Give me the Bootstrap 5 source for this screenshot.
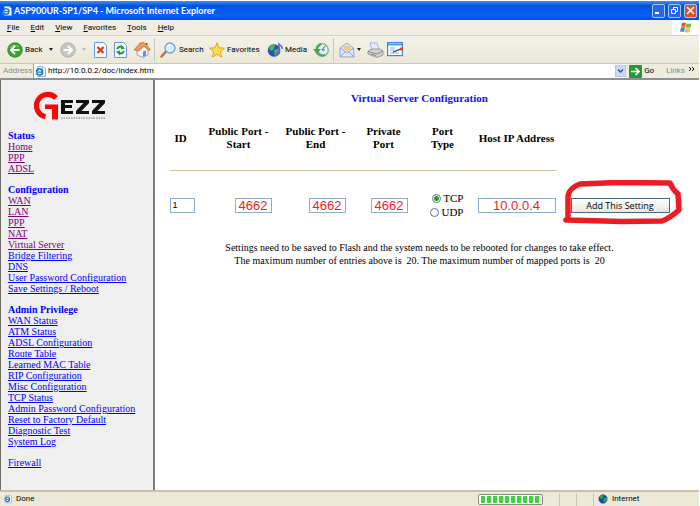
<!DOCTYPE html>
<html lang="en">
<head>
<meta charset="utf-8">
<meta name="viewport" content="width=device-width, initial-scale=1">
<title>ASP900UR-SP1/SP4 - Microsoft Internet Explorer</title>
<link href="https://cdn.jsdelivr.net/npm/bootstrap@5.3.0/dist/css/bootstrap.min.css" rel="stylesheet">
<style>
body{font:8px/10px Roboto,"Liberation Sans",sans-serif;color:#000;background:#fff;padding:1px 1px 0 0}
svg{display:block;flex:none}
button{font:inherit;color:inherit}
.titlebar{height:19px;background:linear-gradient(#3a92fa,#0453dd 25%,#0560f8 75%,#0450d8);color:#fff;padding:0 2px}
.titlebar h1{font:bold 9px/14px Lato,"Noto Sans",sans-serif;margin:0 auto 0 2px}
.winbtns{gap:3px}
.winbtn{width:13px;height:14px;padding:0;border:1px solid #a9c4f5;border-radius:2px;background:#2a63e4;display:grid;place-items:center}
.winbtn.shut{background:#dd5030}
.menubar{height:16px;background:#efede4;border-bottom:1px solid #d8d4c4}
.menubar button,.tool{border:0;background:none;padding:0;text-align:left}
.menubar button::first-letter{text-decoration:underline}
.menus{padding-left:7px;gap:11px}
.flagbox{width:27px;background:#fff}
.toolbar{height:28px;background:linear-gradient(#f3f1e8,#ebe8d8);border-bottom:1px solid #b9cbdc;padding-left:7px}
.tool{display:flex;align-items:center;gap:2px;height:18px}
.w20{width:20px}.w28{width:28px}.w34{width:34px}.w53{width:53px}.w49{width:49px}.w58{width:58px}.w46{width:46px}
.rule{width:1px;height:24px;background:#cbc8b8;margin-right:5px}
.caret{width:0;height:0;border:2px solid transparent;border-top:3px solid #222;border-bottom:0}
.addressbar{height:16px;background:#efecdd;border-bottom:2px solid #8d928e;gap:3px}
.addressbar label,.dim{color:#8b8a82}
.addressbar label{width:30px;padding-left:3px}
.urlbox{height:14px;background:#fff;border-left:1px solid #8ba5c4;padding-left:1px}
.urlbox input{border:0;padding:0 0 0 2px;outline:0;background:none;font:inherit;min-width:0}
.dropbtn{width:11px;height:12px;border:1px solid #b5c8f0;background:#c9d8fa;padding:0;display:grid;place-items:center}
.sidebar{width:155px;background:#efefef;border-left:1px solid #716f64;border-right:2px solid #827f72;padding:10px 6px 10px 7px;font:10px/11px "Liberation Serif",serif}
.sidebar h2{font:bold 10px/11px "Liberation Serif",serif;color:#00f;margin:0}
.sidebar ul{margin-bottom:10px}
.sidebar a{color:#00f;text-decoration:underline}
.sidebar a.seen{color:#800080}
.brand-logo{margin:0 0 10px 23px}
.page{font:10px/13px "Liberation Serif",serif;padding:11px 15px 0 0}
.page h2{font:bold 11px/14px "Liberation Serif",serif;color:#11f;margin-bottom:13px}
.page table{width:500px;table-layout:fixed}
.page th{font-size:11px;line-height:13px;height:40px;text-align:center;vertical-align:middle;padding:0}
.page td{padding:0}
.page th.idh{text-align:left;padding-left:5px}
.page hr{margin:12px 0 19px;border:0;height:1px;background:#cdc3a0;opacity:1}
.page tr.entry td{height:30px;vertical-align:middle}
.p6{padding-right:6px!important}.p8{padding-right:8px!important}
.page input[type=text]{height:15px;border:1px solid #8fadcb;background:#fff;padding:0;border-radius:0;display:block;font:13px/13px "Liberation Sans",sans-serif;color:#ed1c24;text-align:center}
.page input[type=text].idbox{width:25px;font-size:9px;color:#000;text-align:left;padding-left:2px}
.page input.port{width:37px;margin-left:auto}
.page input.host{width:78px;margin:auto}
.radio-row{display:flex;align-items:center;justify-content:flex-end;gap:2px;line-height:14px;font-size:11px}
.radio-row input{appearance:none;width:9px;height:9px;margin:0;border:1px solid #53779c;border-radius:50%;background:#fff}
.radio-row input:checked{background:radial-gradient(#21a121 0 2px,#fff 3px)}
.addbtn{width:99px;height:15px;border:1px solid #47688e;background:linear-gradient(#fff,#e9e7dc);font:9px/11px "Open Sans","Noto Sans",sans-serif;padding:0}
.scrawl{position:absolute;left:-9px;top:-18px;pointer-events:none}
.note{margin-top:21px}
.statusbar{height:16px;border-top:2px solid #c5c1ae;background:#ece9d8}
.meter{width:65px;height:11px;border:1px solid #8a8a84;border-radius:2px;background:#fff;padding:1px 2px}
.meter div{height:7px;background:repeating-linear-gradient(90deg,#3fd33f 0 4px,#fff 4px 6px)}
.cell{height:13px;border-left:1px solid #c9c5b2}
.zone{width:91px}
</style>
</head>
<body class="min-vh-100 d-flex flex-column">
<svg width="0" height="0" class="position-absolute" aria-hidden="true">
  <symbol id="ie" viewBox="0 0 12 12"><path d="M3 .5h6l2.500 2.500v8.500H3z" fill="#fff" stroke="#7fa8dc"/><circle cx="5" cy="6.500" r="3.300" fill="#e8f5ff" stroke="#1976c8" stroke-width="1.800"/><path d="M2 6.700h6" stroke="#1976c8" stroke-width="1.300"/><path d="M.5 10Q3 3 9 2" fill="none" stroke="#65b3ee"/></symbol>
  <symbol id="globe" viewBox="0 0 12 12"><circle cx="6" cy="6" r="5" fill="#1c42c9" stroke="#12277c" stroke-width=".6"/><path d="M3 2l4-1-1 3-2 2-2-1zM7 5l3-1 1 3-3 3-2-2z" fill="#2cae38"/></symbol>
</svg>

<header>
  <div class="titlebar d-flex align-items-center">
    <svg width="10" height="10"><use href="#ie"/></svg>
    <h1>ASP900UR-SP1/SP4 - Microsoft Internet Explorer</h1>
    <div class="winbtns d-flex">
      <button class="winbtn" aria-label="Minimize"><svg width="9" height="9"><path d="M1 7h4" stroke="#fff" stroke-width="2"/></svg></button>
      <button class="winbtn" aria-label="Restore"><svg width="9" height="9"><path d="M3.500 3V1.500h4v4H6M1.500 3.500h4v4h-4z" fill="none" stroke="#fff"/></svg></button>
      <button class="winbtn shut" aria-label="Close"><svg width="9" height="9"><path d="M1 1l7 7M8 1L1 8" stroke="#fff" stroke-width="1.500"/></svg></button>
    </div>
  </div>
  <nav class="menubar d-flex" aria-label="Menu">
    <div class="menus d-flex align-items-center flex-grow-1">
      <button>File</button><button>Edit</button><button>View</button><button>Favorites</button><button>Tools</button><button>Help</button>
    </div>
    <div class="flagbox d-flex align-items-center justify-content-center">
      <svg width="12" height="11" viewBox="0 0 12 11"><path d="M2 1q2-1 4 0L5 5q-2-1-4 0z" fill="#e9562b"/><path d="M6.500 1.300q2 1 5 0l-1 4q-2.500 1-5 0z" fill="#75b83a"/><path d="M1 5.500q2-1 4 0L4 10q-2-1-4 0z" fill="#4b83e0"/><path d="M5.500 6q2 1 5 0l-1 4q-2.500 1-5 0z" fill="#f5bd2e"/></svg>
    </div>
  </nav>
  <div class="toolbar d-flex align-items-center" role="toolbar" aria-label="Standard buttons">
    <button class="tool w53"><svg width="16" height="16"><circle cx="8" cy="8" r="7.300" fill="#37a62f" stroke="#247a22" stroke-width=".7"/><path d="M3 6q4-5 9-1" stroke="#8ed982" fill="none"/><path d="M8 4L4 8l4 4M4.500 8H12.500" fill="none" stroke="#fff" stroke-width="2"/></svg>Back<span class="caret ms-1"></span></button>
    <button class="tool w34" aria-label="Forward"><svg width="16" height="16"><circle cx="8" cy="8" r="7.300" fill="#c5c5c3" stroke="#a3a3a0" stroke-width=".7"/><path d="M8 4l4 4-4 4M11.500 8H3.500" fill="none" stroke="#fff" stroke-width="2"/></svg><span class="caret ms-1 opacity-25"></span></button>
    <button class="tool w20" aria-label="Stop"><svg width="13" height="16"><path d="M.5.500h9l3 3v12H.5z" fill="#f4f8ff" stroke="#6f96d8"/><path d="M3.500 5l6 6M9.500 5l-6 6" stroke="#e23a1e" stroke-width="2.200"/></svg></button>
    <button class="tool w20" aria-label="Refresh"><svg width="13" height="16"><path d="M.5.500h9l3 3v12H.5z" fill="#f4f8ff" stroke="#6f96d8"/><path d="M3 7q2-3.500 5-2M10 9q-2 3.500-5 2" fill="none" stroke="#1f9a35" stroke-width="2"/><path d="M7 2.500l4 4-4 1zM6 13.500l-4-4 4-1z" fill="#1f9a35"/></svg></button>
    <button class="tool w20" aria-label="Home"><svg width="17" height="16"><path d="M3 7v6l6 2.500 5-3V7L9 3z" fill="#eef3fc" stroke="#7d95c5" stroke-width=".8"/><path d="M0 8l6-7 4-.5 6.500 7-2 1L10 4 5 9z" fill="#f09a55" stroke="#b05b30" stroke-width=".6"/><path d="M11 1h2.500v3z" fill="#b9502c"/><path d="M9 9.500l3-1v5l-3 1.500z" fill="#6d8fd2"/></svg></button>
    <span class="rule"></span>
    <button class="tool w49"><svg width="17" height="16"><path d="M1.500 14.500L6 9.500" stroke="#bd6a42" stroke-width="2.500" stroke-linecap="round"/><circle cx="10" cy="6" r="5" fill="#d8f0ff" stroke="#6aa2df" stroke-width="1.300"/><path d="M7 5q1.500-2.500 4-2" stroke="#fff" stroke-width="1.500" fill="none"/></svg>Search</button>
    <button class="tool w58"><svg width="16" height="16"><path d="M8 .8l2 5 5.500.4-4.200 3.600 1.500 5.400L8 12.300 3.200 15.200l1.500-5.400L.5 6.200 6 5.800z" fill="#ffdc55" stroke="#dd9a18" stroke-width=".9"/></svg>Favorites</button>
    <button class="tool w46"><svg width="16" height="16"><circle cx="7" cy="8.500" r="6" fill="#2450d2" stroke="#28409b" stroke-width=".5"/><path d="M2 6q2-4 6-3.500L7 7l-3 2zM7 8l4-1 1 4-4 3z" fill="#49bb47"/><path d="M12 10V2l3 3v2" fill="none" stroke="#6a64c2" stroke-width="1.500"/><ellipse cx="11" cy="11" rx="2" ry="1.600" fill="#6a64c2"/></svg>Media</button>
    <button class="tool w20" aria-label="History"><svg width="16" height="16"><circle cx="9" cy="8" r="6.300" fill="#e1f1f5" stroke="#8ba8a5" stroke-width="1.300"/><path d="M9 8l3-4M9 8h3" stroke="#42607a"/><path d="M12 13A6 6 0 0 1 4 8q0-4 4-6" fill="none" stroke="#48a83e" stroke-width="2"/><path d="M0 7h8l-4 5z" fill="#48a83e"/></svg></button>
    <span class="rule"></span>
    <button class="tool w28" aria-label="Mail"><svg width="16" height="16"><path d="M1 6l7-5 6.500 5L15 15H1z" fill="#dceaff" stroke="#879ccc" stroke-width=".9"/><path d="M3.500 6q4-5 9 0L8 9z" fill="#f7c477"/><path d="M1 6l7 5 6.500-5M1 15l5-5M15 15l-5-5" fill="none" stroke="#879ccc" stroke-width=".9"/></svg><span class="caret"></span></button>
    <button class="tool w20" aria-label="Print"><svg width="17" height="16"><path d="M3 1h7l2 7H5z" fill="#e3efff" stroke="#8fa9d6" stroke-width=".8"/><path d="M1 9l4-2h8l3 2v4l-6 2.500L1 12z" fill="#d2d2d0" stroke="#8b8b8b" stroke-width=".8"/><path d="M1 9.500l9 2.500 6-3M4 12l5 1.500" stroke="#74747b" fill="none" stroke-width=".8"/></svg></button>
    <button class="tool" aria-label="Edit"><svg width="17" height="15"><rect x=".6" y=".6" width="14.800" height="13" fill="#fff" stroke="#3b86d6" stroke-width="1.200"/><path d="M1 2.500h14" stroke="#4e9be8" stroke-width="2"/><path d="M3 6h5M3 8h4M3 11h9" stroke="#8aabd0"/><path d="M6 10l8-3" stroke="#41638c" stroke-width="1.500"/><circle cx="14.500" cy="7" r="1.700" fill="#dc4526"/></svg></button>
  </div>
  <div class="addressbar d-flex align-items-center">
    <label for="url">Address</label>
    <div class="urlbox d-flex align-items-center flex-grow-1">
      <svg width="11" height="11"><use href="#ie"/></svg>
      <input id="url" type="text" class="flex-grow-1" value="http://10.0.0.2/doc/index.htm">
      <button class="dropbtn" aria-label="Show addresses"><svg width="7" height="6"><path d="M1 1.500l2.500 2.500L6 1.500" fill="none" stroke="#3d5687" stroke-width="1.500"/></svg></button>
    </div>
    <button class="tool w34"><svg width="13" height="13"><rect width="13" height="13" rx="1" fill="#239a3a"/><path d="M2 6.500h8M6.500 3l3.500 3.500L6.500 10" fill="none" stroke="#fff" stroke-width="1.700"/></svg><span>Go</span></button>
    <span class="dim">Links</span>
    <svg class="me-1 mb-1" width="7" height="6"><path d="M1 1l2 2-2 2M4 1l2 2-2 2" fill="none" stroke="#111"/></svg>
  </div>
</header>

<div class="d-flex flex-grow-1">
  <nav class="sidebar flex-shrink-0" aria-label="Router pages">
    <svg class="brand-logo" width="76" height="30" viewBox="0 0 76 30" role="img" aria-label="Gezz">
      <path d="M25 8A11.300 11.300 0 1 0 14.500 26.800" fill="none" stroke="#f60808" stroke-width="5.200"/>
      <path d="M14 14.500h13V29.500h-6V19H14z" fill="#f60808"/>
      <path d="M30 10h12v3h-8v2h7v3h-7v3h8v3H30zM45 10h13v3l-7.500 8H58v3H45v-3l7.500-8H45zM61 10h13v3l-7.500 8H74v3H61v-3l7.500-8H61z" fill="#111"/>
      <path d="M30 28h44" stroke="#777" stroke-dasharray="1.500 1"/>
    </svg>
    <h2>Status</h2>
    <ul class="list-unstyled">
      <li><a class="seen" href="#">Home</a></li><li><a class="seen" href="#">PPP</a></li><li><a class="seen" href="#">ADSL</a></li>
    </ul>
    <h2>Configuration</h2>
    <ul class="list-unstyled">
      <li><a class="seen" href="#">WAN</a></li><li><a class="seen" href="#">LAN</a></li><li><a class="seen" href="#">PPP</a></li><li><a class="seen" href="#">NAT</a></li><li><a class="seen" href="#">Virtual Server</a></li><li><a href="#">Bridge Filtering</a></li><li><a href="#">DNS</a></li><li><a href="#">User Password Configuration</a></li><li><a href="#">Save Settings / Reboot</a></li>
    </ul>
    <h2>Admin Privilege</h2>
    <ul class="list-unstyled">
      <li><a href="#">WAN Status</a></li><li><a href="#">ATM Status</a></li><li><a href="#">ADSL Configuration</a></li><li><a href="#">Route Table</a></li><li><a href="#">Learned MAC Table</a></li><li><a href="#">RIP Configuration</a></li><li><a href="#">Misc Configuration</a></li><li><a href="#">TCP Status</a></li><li><a href="#">Admin Password Configuration</a></li><li><a href="#">Reset to Factory Default</a></li><li><a href="#">Diagnostic Test</a></li><li><a href="#">System Log</a></li>
    </ul>
    <a href="#">Firewall</a>
  </nav>

  <main class="page flex-grow-1 text-center">
    <h2>Virtual Server Configuration</h2>
    <form>
      <table class="mx-auto">
        <colgroup><col style="width:6%"><col style="width:15.600%"><col style="width:15.200%"><col style="width:12%"><col style="width:11.600%"><col style="width:18%"><col style="width:21.600%"></colgroup>
        <thead>
          <tr><th class="idh">ID</th><th>Public Port -<br>Start</th><th>Public Port -<br>End</th><th>Private<br>Port</th><th>Port<br>Type</th><th>Host IP Address</th><td></td></tr>
        </thead>
        <tbody>
          <tr><td colspan="6" class="p6"><hr></td><td></td></tr>
          <tr class="entry">
            <td><input class="idbox" type="text" value="1" aria-label="ID"></td>
            <td class="p6"><input class="port" type="text" value="4662" aria-label="Public port start"></td>
            <td class="p8"><input class="port" type="text" value="4662" aria-label="Public port end"></td>
            <td class="p6"><input class="port" type="text" value="4662" aria-label="Private port"></td>
            <td class="p8">
              <label class="radio-row"><input type="radio" name="proto" checked>TCP</label>
              <label class="radio-row"><input type="radio" name="proto">UDP</label>
            </td>
            <td><input class="host" type="text" value="10.0.0.4" aria-label="Host IP address"></td>
            <td class="text-end">
              <div class="position-relative d-inline-block align-middle">
                <button type="button" class="addbtn d-block">Add This Setting</button>
                <svg class="scrawl" width="124" height="46" viewBox="0 0 124 46" aria-hidden="true"><path d="M6 38L6 16Q7 8 18 4L55 2.500L108 3Q111 10 116 14L117 30Q108 38 100 41L60 41.500L4 40" fill="none" stroke="#ed1c24" stroke-width="5.500" stroke-linecap="round" stroke-linejoin="round"/></svg>
              </div>
            </td>
          </tr>
        </tbody>
      </table>
    </form>
    <p class="note">Settings need to be saved to Flash and the system needs to be rebooted for changes to take effect.<br>The maximum number of entries above is&nbsp; 20. The maximum number of mapped ports is&nbsp; 20</p>
  </main>
</div>

<footer class="statusbar d-flex align-items-center">
  <svg class="ms-1" width="8" height="10"><use href="#ie"/></svg>
  <span class="ms-1 me-auto">Done</span>
  <div class="meter" role="progressbar" aria-label="Loading"><div></div></div>
  <div class="cell ms-3"></div><div class="cell ms-3"></div><div class="cell ms-3"></div>
  <svg class="ms-1" width="10" height="10"><use href="#globe"/></svg>
  <span class="zone ps-1">Internet</span>
</footer>
<script src="https://cdn.jsdelivr.net/npm/bootstrap@5.3.0/dist/js/bootstrap.bundle.min.js"></script>
</body>
</html>
